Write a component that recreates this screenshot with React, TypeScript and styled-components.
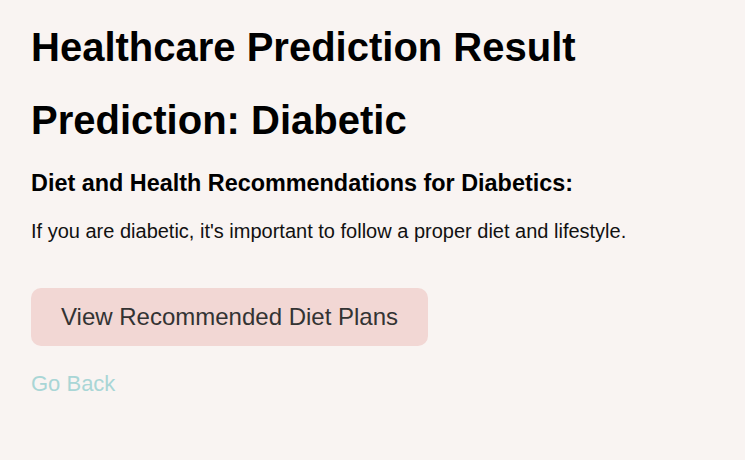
import React from "react";
import styled, { createGlobalStyle } from "styled-components";

const GlobalStyle = createGlobalStyle`
  html, body {
    margin: 0;
    padding: 0;
    background: #f9f4f2;
  }
  body {
    font-family: "Liberation Sans", Arial, sans-serif;
    font-size: 20px;
    color: #000;
  }
`;

const Page = styled.main`
  display: flex;
  flex-direction: column;
  align-items: flex-start;
  padding: 24px 31px;
  min-height: 460px;
  box-sizing: border-box;
  background: #f9f4f2;
`;

const Title = styled.h1`
  margin: 0 0 27px;
  font-size: 40px;
  line-height: 46px;
  font-weight: 700;
  color: #000;
`;

const Subtitle = styled.h3`
  margin: 0 0 23px;
  font-size: 23.4px;
  line-height: 27px;
  font-weight: 700;
  color: #000;
`;

const Text = styled.p`
  margin: 0;
  font-size: 20px;
  line-height: 23px;
  color: #111;
`;

const Button = styled.button`
  margin-top: 45px;
  padding: 15px 30px;
  border: none;
  border-radius: 10px;
  background: #f2d7d4;
  color: #333;
  font-family: inherit;
  font-size: 24px;
  line-height: 28px;
  cursor: pointer;
`;

const BackLink = styled.a`
  margin-top: 25px;
  font-size: 22px;
  line-height: 25px;
  color: #a9d6d6;
  text-decoration: none;
`;

export default function App() {
  return (
    <>
      <GlobalStyle />
      <Page>
        <Title>Healthcare Prediction Result</Title>
        <Title>Prediction: Diabetic</Title>
        <Subtitle>Diet and Health Recommendations for Diabetics:</Subtitle>
        <Text>If you are diabetic, it's important to follow a proper diet and lifestyle.</Text>
        <Button>View Recommended Diet Plans</Button>
        <BackLink href="#">Go Back</BackLink>
      </Page>
    </>
  );
}
